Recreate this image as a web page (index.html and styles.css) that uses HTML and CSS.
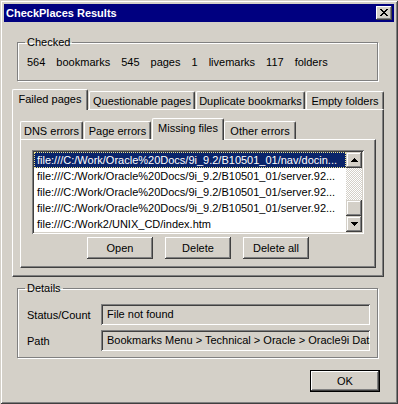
FILE: index.html
```html
<!doctype html>
<html lang="en">

<head>
  <meta charset="utf-8">
  <title>CheckPlaces Results</title>
  <meta name="viewport" content="width=device-width, initial-scale=1">
  <link rel="stylesheet" href="styles.css">
</head>

<body>
  <div class="window">
    <div class="titlebar">
      <span class="title">CheckPlaces Results</span>
      <button class="close-btn" aria-label="Close">
        <svg width="8" height="7" viewBox="0 0 8 7" shape-rendering="crispEdges">
          <rect x="0" y="0" width="2" height="1" /><rect x="6" y="0" width="2" height="1" />
          <rect x="1" y="1" width="2" height="1" /><rect x="5" y="1" width="2" height="1" />
          <rect x="2" y="2" width="4" height="1" />
          <rect x="3" y="3" width="2" height="1" />
          <rect x="2" y="4" width="4" height="1" />
          <rect x="1" y="5" width="2" height="1" /><rect x="5" y="5" width="2" height="1" />
          <rect x="0" y="6" width="2" height="1" /><rect x="6" y="6" width="2" height="1" />
        </svg>
      </button>
    </div>

    <div class="content">
      <fieldset class="group group-checked">
        <legend>Checked</legend>
        <div class="counts">
          <span>564</span><span>bookmarks</span>
          <span>545</span><span>pages</span>
          <span>1</span><span>livemarks</span>
          <span>117</span><span>folders</span>
        </div>
      </fieldset>

      <div class="tab-strip outer-strip">
        <div class="tab tab-failed active">Failed pages</div>
        <div class="tab tab-questionable">Questionable pages</div>
        <div class="tab tab-duplicate">Duplicate bookmarks</div>
        <div class="tab tab-empty">Empty folders</div>
      </div>
      <div class="tab-panel outer-panel">
        <div class="tab-strip inner-strip">
          <div class="tab tab-dns">DNS errors</div>
          <div class="tab tab-page">Page errors</div>
          <div class="tab tab-missing active">Missing files</div>
          <div class="tab tab-other">Other errors</div>
        </div>
        <div class="tab-panel inner-panel">
          <div class="listbox">
            <div class="list-rows">
              <div class="row selected">file:///C:/Work/Oracle%20Docs/9i_9.2/B10501_01/nav/docin...</div>
              <div class="row">file:///C:/Work/Oracle%20Docs/9i_9.2/B10501_01/server.92...</div>
              <div class="row">file:///C:/Work/Oracle%20Docs/9i_9.2/B10501_01/server.92...</div>
              <div class="row">file:///C:/Work/Oracle%20Docs/9i_9.2/B10501_01/server.92...</div>
              <div class="row">file:///C:/Work2/UNIX_CD/index.htm</div>
            </div>
            <div class="scrollbar">
              <div class="sb-btn">
                <svg width="7" height="4" viewBox="0 0 7 4" shape-rendering="crispEdges">
                  <rect x="3" y="0" width="1" height="1" /><rect x="2" y="1" width="3" height="1" />
                  <rect x="1" y="2" width="5" height="1" /><rect x="0" y="3" width="7" height="1" />
                </svg>
              </div>
              <div class="sb-track">
                <div class="sb-thumb"></div>
              </div>
              <div class="sb-btn">
                <svg width="7" height="4" viewBox="0 0 7 4" shape-rendering="crispEdges">
                  <rect x="0" y="0" width="7" height="1" /><rect x="1" y="1" width="5" height="1" />
                  <rect x="2" y="2" width="3" height="1" /><rect x="3" y="3" width="1" height="1" />
                </svg>
              </div>
            </div>
          </div>
          <div class="list-buttons">
            <button class="btn">Open</button>
            <button class="btn">Delete</button>
            <button class="btn">Delete all</button>
          </div>
        </div>
      </div>

      <fieldset class="group group-details">
        <legend>Details</legend>
        <div class="field-row">
          <span class="field-label">Status/Count</span>
          <div class="textbox">File not found</div>
        </div>
        <div class="field-row">
          <span class="field-label">Path</span>
          <div class="textbox">Bookmarks Menu &gt; Technical &gt; Oracle &gt; Oracle9i Data</div>
        </div>
      </fieldset>

      <div class="dialog-buttons">
        <button class="btn btn-default">OK</button>
      </div>
    </div>
  </div>
</body>

</html>
```

FILE: styles.css
```css
* {
  box-sizing: border-box;
}

html,
body {
  margin: 0;
}

body {
  background: #d4d0c8;
  color: #000;
  font-family: "Liberation Sans", Arial, sans-serif;
  font-size: 11px;
}

/* window frame */
.window {
  width: 398px;
  height: 404px;
  padding: 4px;
  background: #d4d0c8;
  box-shadow: inset 1px 1px #d4d0c8, inset -1px -1px #404040, inset 2px 2px #fff, inset -2px -2px #808080;
}

.titlebar {
  display: flex;
  align-items: center;
  justify-content: space-between;
  height: 18px;
  padding: 0 2px 0 2px;
  background: #000080;
  color: #fff;
}

.title {
  font-weight: 700;
  white-space: nowrap;
}

.close-btn {
  display: flex;
  align-items: center;
  justify-content: center;
  width: 16px;
  height: 14px;
  padding: 0 0 1px 0;
  border: 0;
  background: #d4d0c8;
  box-shadow: inset -1px -1px #404040, inset 1px 1px #fff, inset -2px -2px #808080;
}

.content {
  padding: 14px 10px 0 8px;
}

/* group boxes */
.group {
  margin: 0 6px 0 5px;
  padding: 0 7px 0 9px;
  min-width: 0;
  border: 1px solid #808080;
  box-shadow: inset 1px 1px #fff, 1px 1px #fff;
}

.group legend {
  margin-left: -2px;
  padding: 0 2px;
  line-height: 13px;
}

.counts {
  display: flex;
  gap: 11px;
  padding: 7px 0 11px;
  line-height: 13px;
}

/* tabs */
.tab-strip {
  display: flex;
  align-items: flex-end;
}

.outer-strip {
  height: 20px;
  margin-top: 8px;
  gap: 1px;
}

.inner-strip {
  height: 21px;
}

.tab {
  display: flex;
  align-items: center;
  justify-content: center;
  height: 18px;
  border-top: 1px solid #fff;
  border-left: 1px solid #fff;
  border-right: 1px solid #404040;
  border-radius: 2px 2px 0 0;
  box-shadow: inset -1px 0 #808080;
  white-space: nowrap;
}

.tab.active {
  position: relative;
  z-index: 1;
  height: 21px;
  margin-bottom: -1px;
  padding-bottom: 3px;
  background: #d4d0c8;
}

.inner-strip .tab.active {
  height: 22px;
}

.tab-failed { width: 76px; }
.tab-questionable { width: 106px; }
.tab-duplicate { width: 109px; }
.tab-empty { width: 78px; }

.tab-dns { width: 63px; margin-right: 1px; }
.tab-page { width: 67px; margin-right: 1px; }
.tab-missing { width: 72px; }
.tab-other { width: 72px; }

.tab-panel {
  border: 1px solid;
  border-color: #fff #404040 #404040 #fff;
  box-shadow: inset -1px -1px #808080;
}

.outer-panel {
  padding: 8px 7px 8px 7px;
}

.inner-panel {
  padding: 10px 11px 8px 11px;
}

/* list box */
.listbox {
  display: flex;
  height: 84px;
  padding: 2px;
  background: #fff;
  box-shadow: inset 1px 1px #808080, inset -1px -1px #fff, inset 2px 2px #404040, inset -2px -2px #d4d0c8;
}

.list-rows {
  flex: 1;
  min-width: 0;
}

.row {
  height: 16px;
  padding-left: 3px;
  line-height: 16px;
  white-space: nowrap;
  overflow: hidden;
}

.row.selected {
  background: #0a246a;
  color: #fff;
  outline: 1px dotted #f0e68c;
  outline-offset: -1px;
}

.scrollbar {
  display: flex;
  flex-direction: column;
  width: 16px;
}

.sb-btn,
.sb-thumb {
  display: flex;
  align-items: center;
  justify-content: center;
  height: 16px;
  background: #d4d0c8;
  box-shadow: inset -1px -1px #404040, inset 1px 1px #d4d0c8, inset -2px -2px #808080, inset 2px 2px #fff;
}

.sb-track {
  display: flex;
  flex-direction: column;
  justify-content: flex-end;
  flex: 1;
  background: repeating-conic-gradient(#d4d0c8 0 25%, #fff 0 50%) 0 0 / 2px 2px;
}

.list-buttons {
  display: flex;
  justify-content: center;
  gap: 12px;
  margin-top: 3px;
}

.btn {
  width: 66px;
  height: 22px;
  padding: 0;
  border: 0;
  background: #d4d0c8;
  color: #000;
  font: inherit;
  box-shadow: inset -1px -1px #404040, inset 1px 1px #fff, inset -2px -2px #808080;
}

/* details */
.group-details {
  margin-top: 5px;
  padding-top: 9px;
  padding-bottom: 6px;
}

.field-row {
  display: flex;
  align-items: center;
}

.field-row + .field-row {
  margin-top: 5px;
}

.field-label {
  width: 74px;
  flex-shrink: 0;
}

.textbox {
  flex: 1;
  min-width: 0;
  height: 21px;
  padding-left: 6px;
  line-height: 21px;
  white-space: nowrap;
  overflow: hidden;
  box-shadow: inset 1px 1px #808080, inset -1px -1px #fff, inset 2px 2px #404040, inset -2px -2px #d4d0c8;
}

.dialog-buttons {
  display: flex;
  justify-content: flex-end;
  margin: 12px 4px 0 0;
}

.btn-default {
  width: 70px;
  border: 1px solid #000;
}
```
